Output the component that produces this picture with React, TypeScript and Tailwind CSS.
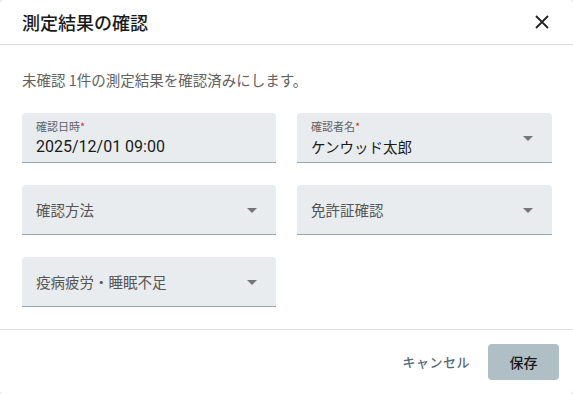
import React from 'react'

const font = { fontFamily: '"Noto Sans CJK JP", "Noto Sans", sans-serif' }

const Arrow = () => (
  <svg width="24" height="24" viewBox="0 0 24 24" className="shrink-0 text-[#757575]">
    <path d="M7 10l5 5 5-5z" fill="currentColor" />
  </svg>
)

const Field: React.FC<{ label: string; value?: string; required?: boolean; select?: boolean; latin?: boolean }> = ({
  label,
  value,
  required,
  select = true,
  latin,
}) => (
  <div className="flex h-[50px] items-center rounded-t-[4px] border-b border-[#9aa6ae] bg-[#e9ecef] pl-[14px] pr-[12px]">
    <div className="flex min-w-0 flex-1 flex-col">
      {value ? (
        <>
          <span className="text-[11px] leading-[14px] text-[#5f6368]">
            {label}
            {required && <span className="text-[#d32f2f]">*</span>}
          </span>
          <span
            className={
              latin
                ? "mt-[4px] font-['Roboto',sans-serif] text-[16px] leading-[20px] text-[#1a1a1a]"
                : 'mt-[4px] text-[14.5px] leading-[20px] text-[#1a1a1a]'
            }
          >
            {value}
          </span>
        </>
      ) : (
        <span className="text-[14.5px] leading-[20px] text-[#555]">{label}</span>
      )}
    </div>
    {select && <Arrow />}
  </div>
)

export default function App() {
  return (
    <div className="h-[394px] w-[573px] bg-[#e5e5e5]" style={font}>
      <div className="flex h-full w-full flex-col rounded-[4px] bg-white">
        <div className="flex h-[45px] items-center justify-between border-b border-[#e0e0e0] pl-[22px] pr-[24px]">
          <h2 className="text-[18px] font-medium text-[#1a1a1a]">測定結果の確認</h2>
          <svg width="14" height="14" viewBox="0 0 14 14" className="text-[#222]">
            <path d="M1 1l12 12M13 1L1 13" stroke="currentColor" strokeWidth="1.8" />
          </svg>
        </div>
        <div className="flex flex-1 flex-col px-[22px] pt-[24px]">
          <p className="text-[14.5px] leading-[22px] text-[#616161]">未確認 1件の測定結果を確認済みにします。</p>
          <div className="mt-[22px] grid grid-cols-[254px_255px] gap-x-[21px] gap-y-[22px]">
            <Field label="確認日時" value="2025/12/01 09:00" required select={false} latin />
            <Field label="確認者名" value="ケンウッド太郎" required />
            <Field label="確認方法" />
            <Field label="免許証確認" />
            <Field label="疫病疲労・睡眠不足" />
          </div>
        </div>
        <div className="flex h-[65px] items-center justify-end gap-[12px] border-t border-[#e0e0e0] pr-[14px]">
          <button className="px-[6px] py-[6px] text-[13px] font-medium tracking-[0.5px] text-[#5a6b7a]">キャンセル</button>
          <button className="h-[36px] w-[71px] rounded-[4px] bg-[#b0bec5] text-[14px] font-medium text-[#1a1a1a]">
            保存
          </button>
        </div>
      </div>
    </div>
  )
}
